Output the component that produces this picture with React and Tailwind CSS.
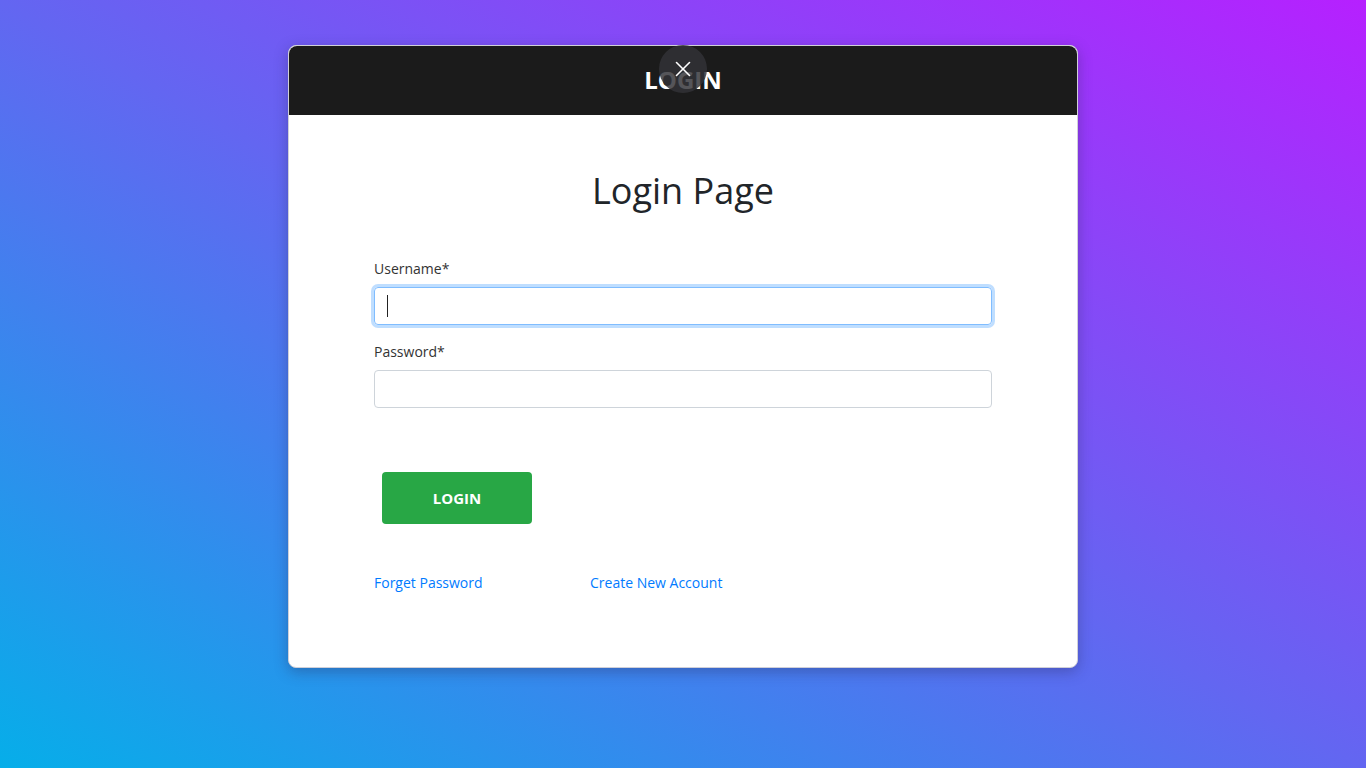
import React from "react";
import { X } from "lucide-react";

const App = () => {
  return (
    <div
      className="min-h-screen w-full bg-[linear-gradient(to_top_right,#06aee9,#6366f1,#b620ff)] pt-[45px]"
      style={{ fontFamily: '"Open Sans", "Liberation Sans", sans-serif' }}
    >
      <div className="relative mx-auto w-[790px] rounded-lg border border-[#d0d0d8] bg-white shadow-[0_4px_14px_rgba(40,40,90,0.35)]">
        <div className="flex h-[69px] items-center justify-center rounded-t-lg bg-[#1b1b1b] pb-[2px]">
          <h1 className="text-[24px] font-bold leading-[32px] text-white">LOGIN</h1>
        </div>
        <button className="absolute left-1/2 top-[-1px] flex h-12 w-12 -translate-x-1/2 items-center justify-center rounded-full bg-[#323237]/[0.83] text-white">
          <X size={26} strokeWidth={1.5} />
        </button>

        <div className="px-[85px] pb-[74px] pt-[54px]">
          <h2 className="text-center text-[36px] leading-[43px] text-[#212529]">Login Page</h2>

          <form className="mt-[46px]" onSubmit={(e) => e.preventDefault()}>
            <label className="block text-[14px] leading-[21px] text-[#333]">Username*</label>
            <div className="relative mt-2">
              <input
                type="text"
                className="block h-[38px] w-full rounded border border-[#80bdff] px-3 text-[16px] caret-transparent shadow-[0_0_0_3px_rgba(0,123,255,0.25)] outline-none"
              />
              <span className="absolute left-[13px] top-[8px] h-[22px] w-px bg-[#222]" />
            </div>

            <label className="mt-4 block text-[14px] leading-[21px] text-[#333]">Password*</label>
            <input
              type="password"
              className="mt-2 block h-[38px] w-full rounded border border-[#ced4da] px-3 text-[16px] outline-none"
            />

            <button
              type="submit"
              className="ml-2 mt-16 flex h-[52px] w-[150px] items-center justify-center rounded bg-[#28a745] text-[15px] font-bold text-white"
            >
              LOGIN
            </button>

            <div className="mt-12 flex text-[14px] leading-[21px] text-[#007bff]">
              <a href="#" className="w-[216px]">Forget Password</a>
              <a href="#">Create New Account</a>
            </div>
          </form>
        </div>
      </div>
    </div>
  );
};

export default App;
